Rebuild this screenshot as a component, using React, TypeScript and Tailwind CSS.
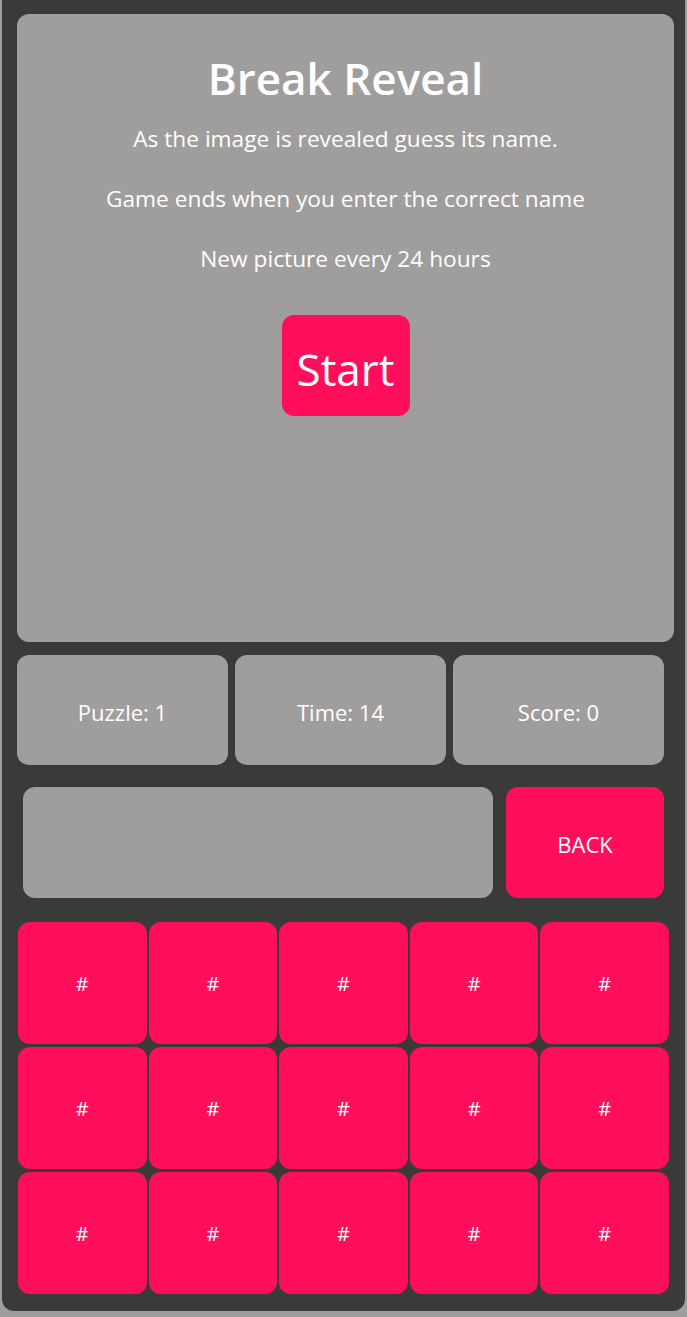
import React from 'react';

const tiles = Array.from({ length: 15 }, (_, i) => i);

export default function App() {
  return (
    <div className="min-h-screen bg-[#a09d9d] font-['Open_Sans',sans-serif] text-white">
      <div className="mx-[2px] rounded-b-xl bg-[#3a3b38] pt-[14px] pl-[15px] pr-[11px] pb-[17px]">
        {/* picture panel */}
        <div className="flex h-[628px] flex-col items-center rounded-xl bg-[#a09d9d] pt-[36px] text-center">
          <h1 className="text-[44px] font-semibold leading-[56px]">Break Reveal</h1>
          <p className="mt-[18px] text-[22.7px] leading-[30px]">As the image is revealed guess its name.</p>
          <p className="mt-[30px] text-[22.7px] leading-[30px]">Game ends when you enter the correct name</p>
          <p className="mt-[30px] text-[22.7px] leading-[30px]">New picture every 24 hours</p>
          <button className="mt-[41px] flex h-[101px] w-[128px] items-center justify-center rounded-xl bg-[#ff0f5b] pt-[6px] text-[44px] leading-none text-white">
            Start
          </button>
        </div>

        {/* stats */}
        <div className="mt-[13px] flex gap-[7px]">
          {['Puzzle: 1', 'Time: 14', 'Score: 0'].map((s) => (
            <div
              key={s}
              className="flex h-[110px] w-[211px] items-center justify-center rounded-xl bg-[#a09d9d] pt-[4px] text-[22px]"
            >
              {s}
            </div>
          ))}
        </div>

        {/* answer row */}
        <div className="mt-[22px] ml-[6px] flex gap-[13px]">
          <input className="h-[111px] w-[470px] rounded-xl bg-[#a09d9d] outline-none" aria-label="guess" />
          <button className="flex h-[111px] w-[158px] items-center justify-center rounded-xl bg-[#ff0f5b] pt-[4px] text-[22px] text-white">
            BACK
          </button>
        </div>

        {/* letter tiles */}
        <div className="mt-[24px] ml-[1px] grid w-[651px] grid-cols-5 gap-x-[2px] gap-y-[3px]">
          {tiles.map((i) => (
            <button
              key={i}
              className="flex h-[122px] items-center justify-center rounded-xl bg-[#ff0f5b] pt-[2px] text-[20px] text-white"
            >
              #
            </button>
          ))}
        </div>
      </div>
    </div>
  );
}
